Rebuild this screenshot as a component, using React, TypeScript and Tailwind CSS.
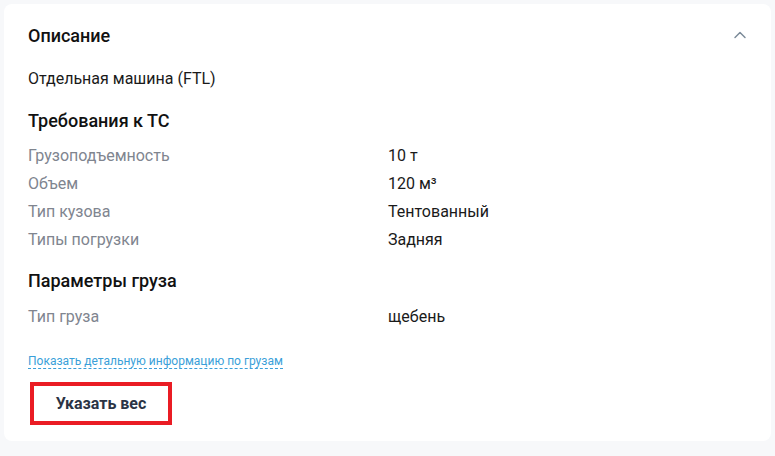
import { ChevronUp } from 'lucide-react';

const vehicleRows = [
  { label: 'Грузоподъемность', value: '10 т' },
  { label: 'Объем', value: '120 м³' },
  { label: 'Тип кузова', value: 'Тентованный' },
  { label: 'Типы погрузки', value: 'Задняя' },
];

const Row = ({ label, value }: { label: string; value: string }) => (
  <div className="flex h-[28px] items-center text-[16px]">
    <div className="w-[360px] text-[#80858f]">{label}</div>
    <div className="text-[#1a1a1a]">{value}</div>
  </div>
);

export default function App() {
  return (
    <div
      className="min-h-screen w-[775px] h-[456px] bg-[#f7f8fa] p-[4px]"
      style={{ fontFamily: 'Roboto, "Noto Sans", sans-serif' }}
    >
      <div className="w-[767px] h-[437px] rounded-lg bg-white pl-[24px] pr-[21px] pt-[20px]">
        {/* header */}
        <div className="flex h-[22px] items-center justify-between">
          <h2 className="text-[18px] font-medium text-[#111]">Описание</h2>
          <ChevronUp className="h-[20px] w-[20px] text-[#7b8b99]" strokeWidth={1.75} />
        </div>

        <p className="mt-[22px] h-[22px] text-[16px] leading-[22px] text-[#1a1a1a]">
          Отдельная машина (FTL)
        </p>

        <h3 className="mt-[20px] h-[22px] text-[18px] font-medium leading-[22px] text-[#111]">
          Требования к ТС
        </h3>

        <div className="mt-[10px]">
          {vehicleRows.map((r) => (
            <Row key={r.label} label={r.label} value={r.value} />
          ))}
        </div>

        <h3 className="mt-[16px] h-[22px] text-[18px] font-medium leading-[22px] text-[#111]">
          Параметры груза
        </h3>

        <div className="mt-[11px]">
          <Row label="Тип груза" value="щебень" />
        </div>

        <div className="mt-[17px]">
          <a className="border-b border-dashed border-[#3a9fd9] text-[12px] leading-[16px] text-[#3a9fd9] cursor-pointer">
            Показать детальную информацию по грузам
          </a>
        </div>

        <div className="mt-[10px] pl-[2px]">
          <button className="flex h-[43px] w-[142px] items-center justify-center border-[4px] border-[#ea1c24] bg-white text-[16px] font-bold text-[#2b3445]">
            Указать вес
          </button>
        </div>
      </div>
    </div>
  );
}
